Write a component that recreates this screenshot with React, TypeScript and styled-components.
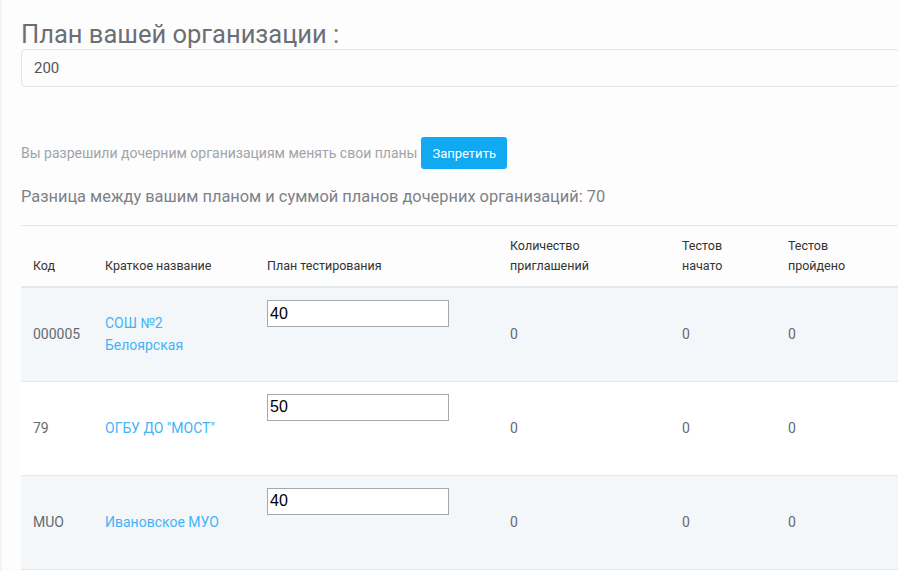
import styled, { createGlobalStyle } from 'styled-components';

const GlobalStyle = createGlobalStyle`
  html, body {
    margin: 0;
    padding: 0;
    background: #fdfdfd;
    font-family: Roboto, "Liberation Sans", sans-serif;
    overflow: hidden;
  }
`;

interface Org {
  code: string;
  name: string[];
  plan: string;
  invites: number;
  started: number;
  passed: number;
}

const orgs: Org[] = [
  { code: '000005', name: ['СОШ №2', 'Белоярская'], plan: '40', invites: 0, started: 0, passed: 0 },
  { code: '79', name: ['ОГБУ ДО "МОСТ"'], plan: '50', invites: 0, started: 0, passed: 0 },
  { code: 'MUO', name: ['Ивановское МУО'], plan: '40', invites: 0, started: 0, passed: 0 },
];

const Page = styled.div`
  width: 940px;
  min-height: 571px;
  border-left: 2px solid #f3f3f3;
  padding: 18px 0 0 19px;
  box-sizing: border-box;
`;

const Title = styled.h2`
  margin: 0;
  font-size: 25.5px;
  font-weight: 400;
  color: #6b6f75;
  line-height: 32px;
`;

const PlanInput = styled.input`
  display: block;
  width: 878px;
  height: 38px;
  margin-top: -1px;
  box-sizing: border-box;
  border: 1px solid #e1e5ea;
  border-radius: 4px;
  background: #fdfdfd;
  padding: 0 12px;
  font-family: Roboto, sans-serif;
  font-size: 15px;
  color: #555;
  outline: none;
`;

const PermitRow = styled.div`
  display: flex;
  align-items: center;
  gap: 4px;
  margin-top: 50px;
  font-size: 14px;
  color: #a0a4a9;
`;

const Button = styled.button`
  height: 32px;
  padding: 0 11px;
  border: none;
  border-radius: 3px;
  background: #10a9f2;
  color: #fff;
  font-family: Roboto, sans-serif;
  font-size: 13px;
`;

const Diff = styled.p`
  margin: 18px 0 0;
  font-size: 16.4px;
  color: #7d8288;
`;

const Table = styled.table`
  margin-top: 19px;
  width: 878px;
  table-layout: fixed;
  border-collapse: collapse;
  border-top: 1px solid #e3e8ee;
`;

const Th = styled.th<{ w: number }>`
  width: ${p => p.w}px;
  box-sizing: border-box;
  text-align: left;
  font-size: 12.5px;
  font-weight: 400;
  color: #333;
  padding: 10px 12px 10px;
  line-height: 20px;
  vertical-align: bottom;
  border-bottom: 2px solid #e3e8ee;
`;

const Tr = styled.tr<{ shaded: boolean }>`
  background: ${p => (p.shaded ? '#f4f7fa' : '#fff')};
  border-bottom: 1px solid #e3e8ee;
  height: 94px;
`;

const Td = styled.td`
  padding: 12px;
  font-size: 14px;
  line-height: 22px;
  color: #666a70;
  vertical-align: middle;
`;

const InputTd = styled(Td)`
  vertical-align: top;
`;

const Link = styled.a`
  color: #44b3f5;
  text-decoration: none;
  display: block;
`;

const CellInput = styled.input`
  width: 182px;
  height: 27px;
  box-sizing: border-box;
  border: 1px solid #a8a8a8;
  padding: 0 2px;
  font-family: "Liberation Sans", Arial, sans-serif;
  font-size: 16px;
  color: #000;
  background: #fff;
`;

export default function App() {
  return <>
    <GlobalStyle />
    <Page>
      <Title>План вашей организации :</Title>
      <PlanInput defaultValue="200" />
      <PermitRow>
        <span>Вы разрешили дочерним организациям менять свои планы</span>
        <Button>Запретить</Button>
      </PermitRow>
      <Diff>Разница между вашим планом и суммой планов дочерних организаций: 70</Diff>
      <Table>
        <thead>
          <tr>
            <Th w={72}>Код</Th>
            <Th w={162}>Краткое название</Th>
            <Th w={243}>План тестирования</Th>
            <Th w={172}>Количество<br />приглашений</Th>
            <Th w={106}>Тестов<br />начато</Th>
            <Th w={123}>Тестов<br />пройдено</Th>
          </tr>
        </thead>
        <tbody>
          {orgs.map((o, i) => (
            <Tr key={o.code} shaded={i % 2 == 0}>
              <Td>{o.code}</Td>
              <Td>{o.name.map(n => <Link key={n} href="#">{n}</Link>)}</Td>
              <InputTd><CellInput defaultValue={o.plan} /></InputTd>
              <Td>{o.invites}</Td>
              <Td>{o.started}</Td>
              <Td>{o.passed}</Td>
            </Tr>
          ))}
        </tbody>
      </Table>
    </Page>
  </>
}
